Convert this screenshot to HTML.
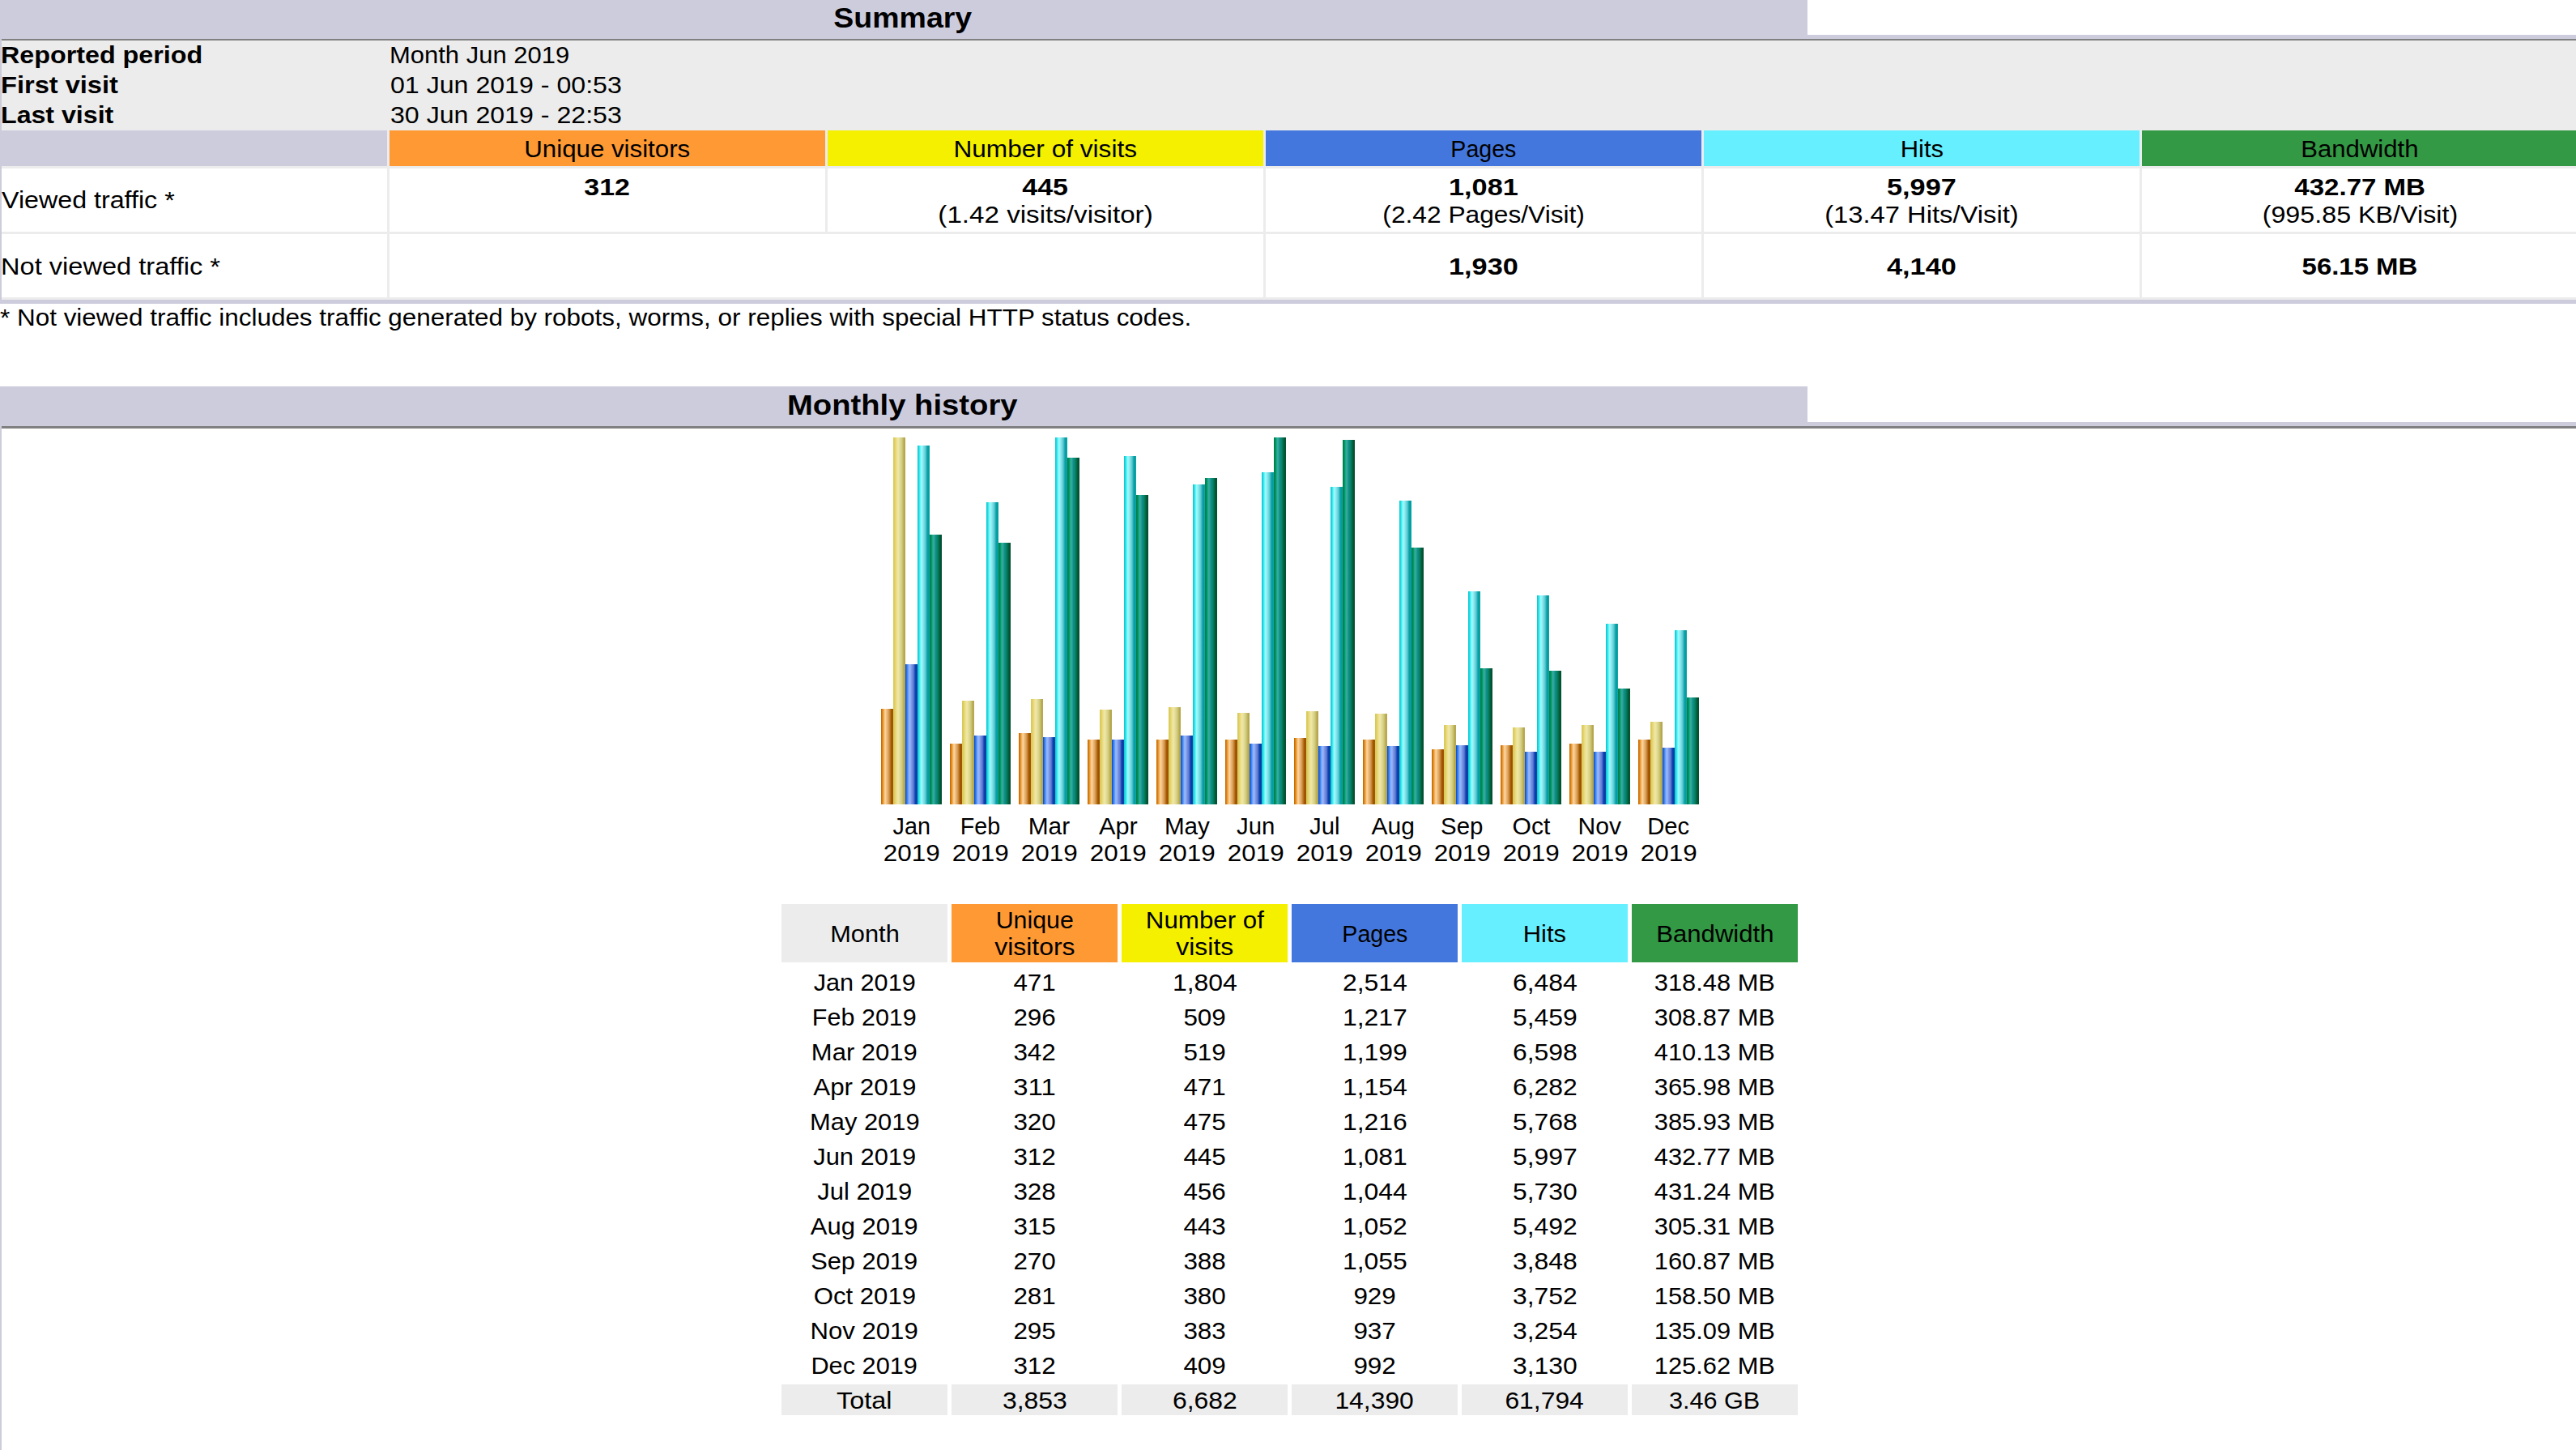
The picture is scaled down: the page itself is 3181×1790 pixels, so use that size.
<!DOCTYPE html>
<html><head><meta charset="utf-8"><title>Statistics</title>
<style>
html,body{margin:0;padding:0;background:#fff;}
body{width:3181px;height:1790px;overflow:hidden;position:relative;font-family:"Liberation Sans",sans-serif;color:#000;}
#p>div{position:absolute;}
.t{white-space:nowrap;line-height:0;}
.c{width:2000px;text-align:center;}
.t span{display:inline-block;}
</style></head><body><div id="p">
<div style="left:0px;top:0px;width:3181px;height:375px;background:#CCCCDD;"></div>
<div style="left:2232px;top:0px;width:949px;height:43px;background:#FFFFFF;"></div>
<div style="left:2px;top:48px;width:3179px;height:2px;background:#808080;"></div>
<div style="left:2px;top:50px;width:3179px;height:320px;background:#ECECEC;"></div>
<div style="left:0px;top:161px;width:478px;height:44px;background:#CCCCDD;"></div>
<div style="left:481px;top:161px;width:538px;height:44px;background:#FF9933;"></div>
<div style="left:1022px;top:161px;width:538px;height:44px;background:#F4F000;"></div>
<div style="left:1563px;top:161px;width:538px;height:44px;background:#4477DD;"></div>
<div style="left:2104px;top:161px;width:538px;height:44px;background:#66F0FF;"></div>
<div style="left:2645px;top:161px;width:538px;height:44px;background:#339944;"></div>
<div style="left:2px;top:208px;width:476px;height:78px;background:#FFFFFF;"></div>
<div style="left:481px;top:208px;width:538px;height:78px;background:#FFFFFF;"></div>
<div style="left:1022px;top:208px;width:538px;height:78px;background:#FFFFFF;"></div>
<div style="left:1563px;top:208px;width:538px;height:78px;background:#FFFFFF;"></div>
<div style="left:2104px;top:208px;width:538px;height:78px;background:#FFFFFF;"></div>
<div style="left:2645px;top:208px;width:538px;height:78px;background:#FFFFFF;"></div>
<div style="left:2px;top:289px;width:476px;height:78px;background:#FFFFFF;"></div>
<div style="left:481px;top:289px;width:1079px;height:78px;background:#FFFFFF;"></div>
<div style="left:1563px;top:289px;width:538px;height:78px;background:#FFFFFF;"></div>
<div style="left:2104px;top:289px;width:538px;height:78px;background:#FFFFFF;"></div>
<div style="left:2645px;top:289px;width:538px;height:78px;background:#FFFFFF;"></div>
<div class="t c" style="left:114.5px;top:21.87px;font-size:35.0px;font-weight:bold;"><span style="transform:scaleX(1.0708)">Summary</span></div>
<div class="t" style="left:1px;top:67.78px;font-size:29.5px;font-weight:bold;"><span style="transform:scaleX(1.0936);transform-origin:0 0">Reported period</span></div>
<div class="t" style="left:1px;top:104.78px;font-size:29.5px;font-weight:bold;"><span style="transform:scaleX(1.1048);transform-origin:0 0">First visit</span></div>
<div class="t" style="left:1px;top:141.78px;font-size:29.5px;font-weight:bold;"><span style="transform:scaleX(1.0893);transform-origin:0 0">Last visit</span></div>
<div class="t" style="left:480.5px;top:67.78px;font-size:29.5px;"><span style="transform:scaleX(1.0498);transform-origin:0 0">Month Jun 2019</span></div>
<div class="t" style="left:482px;top:104.78px;font-size:29.5px;"><span style="transform:scaleX(1.0890);transform-origin:0 0">01 Jun 2019 - 00:53</span></div>
<div class="t" style="left:482px;top:141.78px;font-size:29.5px;"><span style="transform:scaleX(1.0890);transform-origin:0 0">30 Jun 2019 - 22:53</span></div>
<div class="t c" style="left:-250.0px;top:183.78px;font-size:29.5px;"><span style="transform:scaleX(1.0594)">Unique visitors</span></div>
<div class="t c" style="left:291.0px;top:183.78px;font-size:29.5px;"><span style="transform:scaleX(1.0711)">Number of visits</span></div>
<div class="t c" style="left:832.0px;top:183.78px;font-size:29.5px;"><span style="transform:scaleX(0.9676)">Pages</span></div>
<div class="t c" style="left:1373.0px;top:183.78px;font-size:29.5px;"><span style="transform:scaleX(1.0510)">Hits</span></div>
<div class="t c" style="left:1914.0px;top:183.78px;font-size:29.5px;"><span style="transform:scaleX(1.0549)">Bandwidth</span></div>
<div class="t" style="left:2px;top:247.28px;font-size:29.5px;"><span style="transform:scaleX(1.0919);transform-origin:0 0">Viewed traffic *</span></div>
<div class="t c" style="left:-250.0px;top:230.78px;font-size:29.5px;font-weight:bold;"><span style="transform:scaleX(1.1492)">312</span></div>
<div class="t c" style="left:291.0px;top:230.78px;font-size:29.5px;font-weight:bold;"><span style="transform:scaleX(1.1492)">445</span></div>
<div class="t c" style="left:291.0px;top:264.78px;font-size:29.5px;"><span style="transform:scaleX(1.1242)">(1.42 visits/visitor)</span></div>
<div class="t c" style="left:832.0px;top:230.78px;font-size:29.5px;font-weight:bold;"><span style="transform:scaleX(1.1609)">1,081</span></div>
<div class="t c" style="left:832.0px;top:264.78px;font-size:29.5px;"><span style="transform:scaleX(1.0743)">(2.42 Pages/Visit)</span></div>
<div class="t c" style="left:1373.0px;top:230.78px;font-size:29.5px;font-weight:bold;"><span style="transform:scaleX(1.1609)">5,997</span></div>
<div class="t c" style="left:1373.0px;top:264.78px;font-size:29.5px;"><span style="transform:scaleX(1.1095)">(13.47 Hits/Visit)</span></div>
<div class="t c" style="left:1914.0px;top:230.78px;font-size:29.5px;font-weight:bold;"><span style="transform:scaleX(1.1197)">432.77 MB</span></div>
<div class="t c" style="left:1914.0px;top:264.78px;font-size:29.5px;"><span style="transform:scaleX(1.0934)">(995.85 KB/Visit)</span></div>
<div class="t" style="left:1px;top:328.78px;font-size:29.5px;"><span style="transform:scaleX(1.1045);transform-origin:0 0">Not viewed traffic *</span></div>
<div class="t c" style="left:832.0px;top:328.78px;font-size:29.5px;font-weight:bold;"><span style="transform:scaleX(1.1609)">1,930</span></div>
<div class="t c" style="left:1373.0px;top:328.78px;font-size:29.5px;font-weight:bold;"><span style="transform:scaleX(1.1609)">4,140</span></div>
<div class="t c" style="left:1914.0px;top:328.78px;font-size:29.5px;font-weight:bold;"><span style="transform:scaleX(1.1159)">56.15 MB</span></div>
<div class="t" style="left:0px;top:392.28px;font-size:29.5px;"><span style="transform:scaleX(1.0657);transform-origin:0 0">* Not viewed traffic includes traffic generated by robots, worms, or replies with special HTTP status codes.</span></div>
<div style="left:0px;top:477px;width:3181px;height:1313px;background:#CCCCDD;"></div>
<div style="left:2232px;top:477px;width:949px;height:44px;background:#FFFFFF;"></div>
<div style="left:2px;top:526px;width:3179px;height:3px;background:#808080;"></div>
<div style="left:2px;top:529px;width:3179px;height:1261px;background:#FFFFFF;"></div>
<div class="t c" style="left:114.5px;top:499.87px;font-size:35.0px;font-weight:bold;"><span style="transform:scaleX(1.0920)">Monthly history</span></div>
<div style="left:1088px;top:875px;width:15px;height:118px;background:linear-gradient(to right,#C86400 0px,#D27400 1px,#E59A38 2.5px,#FCC888 4.5px,#FCD198 5.5px,#EDBC7E 7px,#DCA45C 9px,#BF7E30 11px,#A85A00 12.5px,#9C4E00 13.8px,#A85A10 15px);"></div>
<div style="left:1103px;top:540px;width:15px;height:453px;background:linear-gradient(to right,#D4CC55 0px,#DECB60 1.5px,#E6D878 3px,#EEE090 4.5px,#F1E8A8 6px,#E2DD98 8px,#D6D088 10px,#C6BC66 12px,#B8AE52 13px,#B0A050 14.2px,#C8B450 15px);"></div>
<div style="left:1118px;top:820px;width:15px;height:173px;background:linear-gradient(to right,#0044DD 0px,#2A70E0 1.5px,#5590F5 3px,#88B4FF 4.5px,#97B4F8 6px,#7890E2 8px,#5F7ED0 10px,#1A44B8 12px,#003DA8 13px,#0C44A6 15px);"></div>
<div style="left:1133px;top:550px;width:15px;height:443px;background:linear-gradient(to right,#08C4CC 0px,#22D8E0 1.5px,#55F0F5 3px,#8CFFFF 4.5px,#9FEEF2 6px,#77DDE5 8px,#55C8D0 10px,#22AAB5 11.5px,#009999 13px,#10A8AD 15px);"></div>
<div style="left:1148px;top:660px;width:15px;height:333px;background:linear-gradient(to right,#007A48 0px,#009058 2px,#09A27A 3px,#2AB095 4px,#3AA8A0 5px,#2AA095 6px,#0E9088 7.5px,#088470 9.5px,#037550 11px,#035E3A 12.5px,#065038 13.5px,#005530 15px);"></div>
<div class="t c" style="left:125.5px;top:1019.78px;font-size:29.5px;"><span style="transform:scaleX(0.9765)">Jan</span></div>
<div class="t c" style="left:125.5px;top:1053.28px;font-size:29.5px;"><span style="transform:scaleX(1.0656)">2019</span></div>
<div style="left:1173px;top:918px;width:15px;height:75px;background:linear-gradient(to right,#C86400 0px,#D27400 1px,#E59A38 2.5px,#FCC888 4.5px,#FCD198 5.5px,#EDBC7E 7px,#DCA45C 9px,#BF7E30 11px,#A85A00 12.5px,#9C4E00 13.8px,#A85A10 15px);"></div>
<div style="left:1188px;top:865px;width:15px;height:128px;background:linear-gradient(to right,#D4CC55 0px,#DECB60 1.5px,#E6D878 3px,#EEE090 4.5px,#F1E8A8 6px,#E2DD98 8px,#D6D088 10px,#C6BC66 12px,#B8AE52 13px,#B0A050 14.2px,#C8B450 15px);"></div>
<div style="left:1203px;top:908px;width:15px;height:85px;background:linear-gradient(to right,#0044DD 0px,#2A70E0 1.5px,#5590F5 3px,#88B4FF 4.5px,#97B4F8 6px,#7890E2 8px,#5F7ED0 10px,#1A44B8 12px,#003DA8 13px,#0C44A6 15px);"></div>
<div style="left:1218px;top:620px;width:15px;height:373px;background:linear-gradient(to right,#08C4CC 0px,#22D8E0 1.5px,#55F0F5 3px,#8CFFFF 4.5px,#9FEEF2 6px,#77DDE5 8px,#55C8D0 10px,#22AAB5 11.5px,#009999 13px,#10A8AD 15px);"></div>
<div style="left:1233px;top:670px;width:15px;height:323px;background:linear-gradient(to right,#007A48 0px,#009058 2px,#09A27A 3px,#2AB095 4px,#3AA8A0 5px,#2AA095 6px,#0E9088 7.5px,#088470 9.5px,#037550 11px,#035E3A 12.5px,#065038 13.5px,#005530 15px);"></div>
<div class="t c" style="left:210.5px;top:1019.78px;font-size:29.5px;"><span style="transform:scaleX(0.9706)">Feb</span></div>
<div class="t c" style="left:210.5px;top:1053.28px;font-size:29.5px;"><span style="transform:scaleX(1.0656)">2019</span></div>
<div style="left:1258px;top:905px;width:15px;height:88px;background:linear-gradient(to right,#C86400 0px,#D27400 1px,#E59A38 2.5px,#FCC888 4.5px,#FCD198 5.5px,#EDBC7E 7px,#DCA45C 9px,#BF7E30 11px,#A85A00 12.5px,#9C4E00 13.8px,#A85A10 15px);"></div>
<div style="left:1273px;top:863px;width:15px;height:130px;background:linear-gradient(to right,#D4CC55 0px,#DECB60 1.5px,#E6D878 3px,#EEE090 4.5px,#F1E8A8 6px,#E2DD98 8px,#D6D088 10px,#C6BC66 12px,#B8AE52 13px,#B0A050 14.2px,#C8B450 15px);"></div>
<div style="left:1288px;top:910px;width:15px;height:83px;background:linear-gradient(to right,#0044DD 0px,#2A70E0 1.5px,#5590F5 3px,#88B4FF 4.5px,#97B4F8 6px,#7890E2 8px,#5F7ED0 10px,#1A44B8 12px,#003DA8 13px,#0C44A6 15px);"></div>
<div style="left:1303px;top:540px;width:15px;height:453px;background:linear-gradient(to right,#08C4CC 0px,#22D8E0 1.5px,#55F0F5 3px,#8CFFFF 4.5px,#9FEEF2 6px,#77DDE5 8px,#55C8D0 10px,#22AAB5 11.5px,#009999 13px,#10A8AD 15px);"></div>
<div style="left:1318px;top:565px;width:15px;height:428px;background:linear-gradient(to right,#007A48 0px,#009058 2px,#09A27A 3px,#2AB095 4px,#3AA8A0 5px,#2AA095 6px,#0E9088 7.5px,#088470 9.5px,#037550 11px,#035E3A 12.5px,#065038 13.5px,#005530 15px);"></div>
<div class="t c" style="left:295.5px;top:1019.78px;font-size:29.5px;"><span style="transform:scaleX(1.0119)">Mar</span></div>
<div class="t c" style="left:295.5px;top:1053.28px;font-size:29.5px;"><span style="transform:scaleX(1.0656)">2019</span></div>
<div style="left:1343px;top:913px;width:15px;height:80px;background:linear-gradient(to right,#C86400 0px,#D27400 1px,#E59A38 2.5px,#FCC888 4.5px,#FCD198 5.5px,#EDBC7E 7px,#DCA45C 9px,#BF7E30 11px,#A85A00 12.5px,#9C4E00 13.8px,#A85A10 15px);"></div>
<div style="left:1358px;top:876px;width:15px;height:117px;background:linear-gradient(to right,#D4CC55 0px,#DECB60 1.5px,#E6D878 3px,#EEE090 4.5px,#F1E8A8 6px,#E2DD98 8px,#D6D088 10px,#C6BC66 12px,#B8AE52 13px,#B0A050 14.2px,#C8B450 15px);"></div>
<div style="left:1373px;top:913px;width:15px;height:80px;background:linear-gradient(to right,#0044DD 0px,#2A70E0 1.5px,#5590F5 3px,#88B4FF 4.5px,#97B4F8 6px,#7890E2 8px,#5F7ED0 10px,#1A44B8 12px,#003DA8 13px,#0C44A6 15px);"></div>
<div style="left:1388px;top:563px;width:15px;height:430px;background:linear-gradient(to right,#08C4CC 0px,#22D8E0 1.5px,#55F0F5 3px,#8CFFFF 4.5px,#9FEEF2 6px,#77DDE5 8px,#55C8D0 10px,#22AAB5 11.5px,#009999 13px,#10A8AD 15px);"></div>
<div style="left:1403px;top:611px;width:15px;height:382px;background:linear-gradient(to right,#007A48 0px,#009058 2px,#09A27A 3px,#2AB095 4px,#3AA8A0 5px,#2AA095 6px,#0E9088 7.5px,#088470 9.5px,#037550 11px,#035E3A 12.5px,#065038 13.5px,#005530 15px);"></div>
<div class="t c" style="left:380.5px;top:1019.78px;font-size:29.5px;"><span style="transform:scaleX(1.0387)">Apr</span></div>
<div class="t c" style="left:380.5px;top:1053.28px;font-size:29.5px;"><span style="transform:scaleX(1.0656)">2019</span></div>
<div style="left:1428px;top:913px;width:15px;height:80px;background:linear-gradient(to right,#C86400 0px,#D27400 1px,#E59A38 2.5px,#FCC888 4.5px,#FCD198 5.5px,#EDBC7E 7px,#DCA45C 9px,#BF7E30 11px,#A85A00 12.5px,#9C4E00 13.8px,#A85A10 15px);"></div>
<div style="left:1443px;top:873px;width:15px;height:120px;background:linear-gradient(to right,#D4CC55 0px,#DECB60 1.5px,#E6D878 3px,#EEE090 4.5px,#F1E8A8 6px,#E2DD98 8px,#D6D088 10px,#C6BC66 12px,#B8AE52 13px,#B0A050 14.2px,#C8B450 15px);"></div>
<div style="left:1458px;top:908px;width:15px;height:85px;background:linear-gradient(to right,#0044DD 0px,#2A70E0 1.5px,#5590F5 3px,#88B4FF 4.5px,#97B4F8 6px,#7890E2 8px,#5F7ED0 10px,#1A44B8 12px,#003DA8 13px,#0C44A6 15px);"></div>
<div style="left:1473px;top:598px;width:15px;height:395px;background:linear-gradient(to right,#08C4CC 0px,#22D8E0 1.5px,#55F0F5 3px,#8CFFFF 4.5px,#9FEEF2 6px,#77DDE5 8px,#55C8D0 10px,#22AAB5 11.5px,#009999 13px,#10A8AD 15px);"></div>
<div style="left:1488px;top:590px;width:15px;height:403px;background:linear-gradient(to right,#007A48 0px,#009058 2px,#09A27A 3px,#2AB095 4px,#3AA8A0 5px,#2AA095 6px,#0E9088 7.5px,#088470 9.5px,#037550 11px,#035E3A 12.5px,#065038 13.5px,#005530 15px);"></div>
<div class="t c" style="left:465.5px;top:1019.78px;font-size:29.5px;"><span style="transform:scaleX(1.0039)">May</span></div>
<div class="t c" style="left:465.5px;top:1053.28px;font-size:29.5px;"><span style="transform:scaleX(1.0656)">2019</span></div>
<div style="left:1513px;top:913px;width:15px;height:80px;background:linear-gradient(to right,#C86400 0px,#D27400 1px,#E59A38 2.5px,#FCC888 4.5px,#FCD198 5.5px,#EDBC7E 7px,#DCA45C 9px,#BF7E30 11px,#A85A00 12.5px,#9C4E00 13.8px,#A85A10 15px);"></div>
<div style="left:1528px;top:880px;width:15px;height:113px;background:linear-gradient(to right,#D4CC55 0px,#DECB60 1.5px,#E6D878 3px,#EEE090 4.5px,#F1E8A8 6px,#E2DD98 8px,#D6D088 10px,#C6BC66 12px,#B8AE52 13px,#B0A050 14.2px,#C8B450 15px);"></div>
<div style="left:1543px;top:918px;width:15px;height:75px;background:linear-gradient(to right,#0044DD 0px,#2A70E0 1.5px,#5590F5 3px,#88B4FF 4.5px,#97B4F8 6px,#7890E2 8px,#5F7ED0 10px,#1A44B8 12px,#003DA8 13px,#0C44A6 15px);"></div>
<div style="left:1558px;top:583px;width:15px;height:410px;background:linear-gradient(to right,#08C4CC 0px,#22D8E0 1.5px,#55F0F5 3px,#8CFFFF 4.5px,#9FEEF2 6px,#77DDE5 8px,#55C8D0 10px,#22AAB5 11.5px,#009999 13px,#10A8AD 15px);"></div>
<div style="left:1573px;top:540px;width:15px;height:453px;background:linear-gradient(to right,#007A48 0px,#009058 2px,#09A27A 3px,#2AB095 4px,#3AA8A0 5px,#2AA095 6px,#0E9088 7.5px,#088470 9.5px,#037550 11px,#035E3A 12.5px,#065038 13.5px,#005530 15px);"></div>
<div class="t c" style="left:550.5px;top:1019.78px;font-size:29.5px;"><span style="transform:scaleX(0.9955)">Jun</span></div>
<div class="t c" style="left:550.5px;top:1053.28px;font-size:29.5px;"><span style="transform:scaleX(1.0656)">2019</span></div>
<div style="left:1598px;top:911px;width:15px;height:82px;background:linear-gradient(to right,#C86400 0px,#D27400 1px,#E59A38 2.5px,#FCC888 4.5px,#FCD198 5.5px,#EDBC7E 7px,#DCA45C 9px,#BF7E30 11px,#A85A00 12.5px,#9C4E00 13.8px,#A85A10 15px);"></div>
<div style="left:1613px;top:878px;width:15px;height:115px;background:linear-gradient(to right,#D4CC55 0px,#DECB60 1.5px,#E6D878 3px,#EEE090 4.5px,#F1E8A8 6px,#E2DD98 8px,#D6D088 10px,#C6BC66 12px,#B8AE52 13px,#B0A050 14.2px,#C8B450 15px);"></div>
<div style="left:1628px;top:921px;width:15px;height:72px;background:linear-gradient(to right,#0044DD 0px,#2A70E0 1.5px,#5590F5 3px,#88B4FF 4.5px,#97B4F8 6px,#7890E2 8px,#5F7ED0 10px,#1A44B8 12px,#003DA8 13px,#0C44A6 15px);"></div>
<div style="left:1643px;top:601px;width:15px;height:392px;background:linear-gradient(to right,#08C4CC 0px,#22D8E0 1.5px,#55F0F5 3px,#8CFFFF 4.5px,#9FEEF2 6px,#77DDE5 8px,#55C8D0 10px,#22AAB5 11.5px,#009999 13px,#10A8AD 15px);"></div>
<div style="left:1658px;top:543px;width:15px;height:450px;background:linear-gradient(to right,#007A48 0px,#009058 2px,#09A27A 3px,#2AB095 4px,#3AA8A0 5px,#2AA095 6px,#0E9088 7.5px,#088470 9.5px,#037550 11px,#035E3A 12.5px,#065038 13.5px,#005530 15px);"></div>
<div class="t c" style="left:635.5px;top:1019.78px;font-size:29.5px;"><span style="transform:scaleX(0.9944)">Jul</span></div>
<div class="t c" style="left:635.5px;top:1053.28px;font-size:29.5px;"><span style="transform:scaleX(1.0656)">2019</span></div>
<div style="left:1683px;top:913px;width:15px;height:80px;background:linear-gradient(to right,#C86400 0px,#D27400 1px,#E59A38 2.5px,#FCC888 4.5px,#FCD198 5.5px,#EDBC7E 7px,#DCA45C 9px,#BF7E30 11px,#A85A00 12.5px,#9C4E00 13.8px,#A85A10 15px);"></div>
<div style="left:1698px;top:881px;width:15px;height:112px;background:linear-gradient(to right,#D4CC55 0px,#DECB60 1.5px,#E6D878 3px,#EEE090 4.5px,#F1E8A8 6px,#E2DD98 8px,#D6D088 10px,#C6BC66 12px,#B8AE52 13px,#B0A050 14.2px,#C8B450 15px);"></div>
<div style="left:1713px;top:921px;width:15px;height:72px;background:linear-gradient(to right,#0044DD 0px,#2A70E0 1.5px,#5590F5 3px,#88B4FF 4.5px,#97B4F8 6px,#7890E2 8px,#5F7ED0 10px,#1A44B8 12px,#003DA8 13px,#0C44A6 15px);"></div>
<div style="left:1728px;top:618px;width:15px;height:375px;background:linear-gradient(to right,#08C4CC 0px,#22D8E0 1.5px,#55F0F5 3px,#8CFFFF 4.5px,#9FEEF2 6px,#77DDE5 8px,#55C8D0 10px,#22AAB5 11.5px,#009999 13px,#10A8AD 15px);"></div>
<div style="left:1743px;top:676px;width:15px;height:317px;background:linear-gradient(to right,#007A48 0px,#009058 2px,#09A27A 3px,#2AB095 4px,#3AA8A0 5px,#2AA095 6px,#0E9088 7.5px,#088470 9.5px,#037550 11px,#035E3A 12.5px,#065038 13.5px,#005530 15px);"></div>
<div class="t c" style="left:720.5px;top:1019.78px;font-size:29.5px;"><span style="transform:scaleX(1.0165)">Aug</span></div>
<div class="t c" style="left:720.5px;top:1053.28px;font-size:29.5px;"><span style="transform:scaleX(1.0656)">2019</span></div>
<div style="left:1768px;top:925px;width:15px;height:68px;background:linear-gradient(to right,#C86400 0px,#D27400 1px,#E59A38 2.5px,#FCC888 4.5px,#FCD198 5.5px,#EDBC7E 7px,#DCA45C 9px,#BF7E30 11px,#A85A00 12.5px,#9C4E00 13.8px,#A85A10 15px);"></div>
<div style="left:1783px;top:895px;width:15px;height:98px;background:linear-gradient(to right,#D4CC55 0px,#DECB60 1.5px,#E6D878 3px,#EEE090 4.5px,#F1E8A8 6px,#E2DD98 8px,#D6D088 10px,#C6BC66 12px,#B8AE52 13px,#B0A050 14.2px,#C8B450 15px);"></div>
<div style="left:1798px;top:920px;width:15px;height:73px;background:linear-gradient(to right,#0044DD 0px,#2A70E0 1.5px,#5590F5 3px,#88B4FF 4.5px,#97B4F8 6px,#7890E2 8px,#5F7ED0 10px,#1A44B8 12px,#003DA8 13px,#0C44A6 15px);"></div>
<div style="left:1813px;top:730px;width:15px;height:263px;background:linear-gradient(to right,#08C4CC 0px,#22D8E0 1.5px,#55F0F5 3px,#8CFFFF 4.5px,#9FEEF2 6px,#77DDE5 8px,#55C8D0 10px,#22AAB5 11.5px,#009999 13px,#10A8AD 15px);"></div>
<div style="left:1828px;top:825px;width:15px;height:168px;background:linear-gradient(to right,#007A48 0px,#009058 2px,#09A27A 3px,#2AB095 4px,#3AA8A0 5px,#2AA095 6px,#0E9088 7.5px,#088470 9.5px,#037550 11px,#035E3A 12.5px,#065038 13.5px,#005530 15px);"></div>
<div class="t c" style="left:805.5px;top:1019.78px;font-size:29.5px;"><span style="transform:scaleX(0.9975)">Sep</span></div>
<div class="t c" style="left:805.5px;top:1053.28px;font-size:29.5px;"><span style="transform:scaleX(1.0656)">2019</span></div>
<div style="left:1853px;top:920px;width:15px;height:73px;background:linear-gradient(to right,#C86400 0px,#D27400 1px,#E59A38 2.5px,#FCC888 4.5px,#FCD198 5.5px,#EDBC7E 7px,#DCA45C 9px,#BF7E30 11px,#A85A00 12.5px,#9C4E00 13.8px,#A85A10 15px);"></div>
<div style="left:1868px;top:898px;width:15px;height:95px;background:linear-gradient(to right,#D4CC55 0px,#DECB60 1.5px,#E6D878 3px,#EEE090 4.5px,#F1E8A8 6px,#E2DD98 8px,#D6D088 10px,#C6BC66 12px,#B8AE52 13px,#B0A050 14.2px,#C8B450 15px);"></div>
<div style="left:1883px;top:928px;width:15px;height:65px;background:linear-gradient(to right,#0044DD 0px,#2A70E0 1.5px,#5590F5 3px,#88B4FF 4.5px,#97B4F8 6px,#7890E2 8px,#5F7ED0 10px,#1A44B8 12px,#003DA8 13px,#0C44A6 15px);"></div>
<div style="left:1898px;top:735px;width:15px;height:258px;background:linear-gradient(to right,#08C4CC 0px,#22D8E0 1.5px,#55F0F5 3px,#8CFFFF 4.5px,#9FEEF2 6px,#77DDE5 8px,#55C8D0 10px,#22AAB5 11.5px,#009999 13px,#10A8AD 15px);"></div>
<div style="left:1913px;top:828px;width:15px;height:165px;background:linear-gradient(to right,#007A48 0px,#009058 2px,#09A27A 3px,#2AB095 4px,#3AA8A0 5px,#2AA095 6px,#0E9088 7.5px,#088470 9.5px,#037550 11px,#035E3A 12.5px,#065038 13.5px,#005530 15px);"></div>
<div class="t c" style="left:890.5px;top:1019.78px;font-size:29.5px;"><span style="transform:scaleX(1.0197)">Oct</span></div>
<div class="t c" style="left:890.5px;top:1053.28px;font-size:29.5px;"><span style="transform:scaleX(1.0656)">2019</span></div>
<div style="left:1938px;top:918px;width:15px;height:75px;background:linear-gradient(to right,#C86400 0px,#D27400 1px,#E59A38 2.5px,#FCC888 4.5px,#FCD198 5.5px,#EDBC7E 7px,#DCA45C 9px,#BF7E30 11px,#A85A00 12.5px,#9C4E00 13.8px,#A85A10 15px);"></div>
<div style="left:1953px;top:895px;width:15px;height:98px;background:linear-gradient(to right,#D4CC55 0px,#DECB60 1.5px,#E6D878 3px,#EEE090 4.5px,#F1E8A8 6px,#E2DD98 8px,#D6D088 10px,#C6BC66 12px,#B8AE52 13px,#B0A050 14.2px,#C8B450 15px);"></div>
<div style="left:1968px;top:928px;width:15px;height:65px;background:linear-gradient(to right,#0044DD 0px,#2A70E0 1.5px,#5590F5 3px,#88B4FF 4.5px,#97B4F8 6px,#7890E2 8px,#5F7ED0 10px,#1A44B8 12px,#003DA8 13px,#0C44A6 15px);"></div>
<div style="left:1983px;top:770px;width:15px;height:223px;background:linear-gradient(to right,#08C4CC 0px,#22D8E0 1.5px,#55F0F5 3px,#8CFFFF 4.5px,#9FEEF2 6px,#77DDE5 8px,#55C8D0 10px,#22AAB5 11.5px,#009999 13px,#10A8AD 15px);"></div>
<div style="left:1998px;top:850px;width:15px;height:143px;background:linear-gradient(to right,#007A48 0px,#009058 2px,#09A27A 3px,#2AB095 4px,#3AA8A0 5px,#2AA095 6px,#0E9088 7.5px,#088470 9.5px,#037550 11px,#035E3A 12.5px,#065038 13.5px,#005530 15px);"></div>
<div class="t c" style="left:975.5px;top:1019.78px;font-size:29.5px;"><span style="transform:scaleX(1.0207)">Nov</span></div>
<div class="t c" style="left:975.5px;top:1053.28px;font-size:29.5px;"><span style="transform:scaleX(1.0656)">2019</span></div>
<div style="left:2023px;top:913px;width:15px;height:80px;background:linear-gradient(to right,#C86400 0px,#D27400 1px,#E59A38 2.5px,#FCC888 4.5px,#FCD198 5.5px,#EDBC7E 7px,#DCA45C 9px,#BF7E30 11px,#A85A00 12.5px,#9C4E00 13.8px,#A85A10 15px);"></div>
<div style="left:2038px;top:891px;width:15px;height:102px;background:linear-gradient(to right,#D4CC55 0px,#DECB60 1.5px,#E6D878 3px,#EEE090 4.5px,#F1E8A8 6px,#E2DD98 8px,#D6D088 10px,#C6BC66 12px,#B8AE52 13px,#B0A050 14.2px,#C8B450 15px);"></div>
<div style="left:2053px;top:923px;width:15px;height:70px;background:linear-gradient(to right,#0044DD 0px,#2A70E0 1.5px,#5590F5 3px,#88B4FF 4.5px,#97B4F8 6px,#7890E2 8px,#5F7ED0 10px,#1A44B8 12px,#003DA8 13px,#0C44A6 15px);"></div>
<div style="left:2068px;top:778px;width:15px;height:215px;background:linear-gradient(to right,#08C4CC 0px,#22D8E0 1.5px,#55F0F5 3px,#8CFFFF 4.5px,#9FEEF2 6px,#77DDE5 8px,#55C8D0 10px,#22AAB5 11.5px,#009999 13px,#10A8AD 15px);"></div>
<div style="left:2083px;top:861px;width:15px;height:132px;background:linear-gradient(to right,#007A48 0px,#009058 2px,#09A27A 3px,#2AB095 4px,#3AA8A0 5px,#2AA095 6px,#0E9088 7.5px,#088470 9.5px,#037550 11px,#035E3A 12.5px,#065038 13.5px,#005530 15px);"></div>
<div class="t c" style="left:1060.5px;top:1019.78px;font-size:29.5px;"><span style="transform:scaleX(0.9892)">Dec</span></div>
<div class="t c" style="left:1060.5px;top:1053.28px;font-size:29.5px;"><span style="transform:scaleX(1.0656)">2019</span></div>
<div style="left:965px;top:1116px;width:205px;height:71.5px;background:#ECECEC;"></div>
<div style="left:1175px;top:1116px;width:205px;height:71.5px;background:#FF9933;"></div>
<div style="left:1385px;top:1116px;width:205px;height:71.5px;background:#F4F000;"></div>
<div style="left:1595px;top:1116px;width:205px;height:71.5px;background:#4477DD;"></div>
<div style="left:1805px;top:1116px;width:205px;height:71.5px;background:#66F0FF;"></div>
<div style="left:2015px;top:1116px;width:205px;height:71.5px;background:#339944;"></div>
<div class="t c" style="left:67.5px;top:1152.78px;font-size:29.5px;"><span style="transform:scaleX(1.0428)">Month</span></div>
<div class="t c" style="left:277.5px;top:1135.78px;font-size:29.5px;"><span style="transform:scaleX(1.0270)">Unique</span></div>
<div class="t c" style="left:277.5px;top:1169.28px;font-size:29.5px;"><span style="transform:scaleX(1.0818)">visitors</span></div>
<div class="t c" style="left:487.5px;top:1135.78px;font-size:29.5px;"><span style="transform:scaleX(1.0600)">Number of</span></div>
<div class="t c" style="left:487.5px;top:1169.28px;font-size:29.5px;"><span style="transform:scaleX(1.0810)">visits</span></div>
<div class="t c" style="left:697.5px;top:1152.78px;font-size:29.5px;"><span style="transform:scaleX(0.9676)">Pages</span></div>
<div class="t c" style="left:907.5px;top:1152.78px;font-size:29.5px;"><span style="transform:scaleX(1.0510)">Hits</span></div>
<div class="t c" style="left:1117.5px;top:1152.78px;font-size:29.5px;"><span style="transform:scaleX(1.0549)">Bandwidth</span></div>
<div class="t c" style="left:67.5px;top:1212.78px;font-size:29.5px;"><span style="transform:scaleX(1.0384)">Jan 2019</span></div>
<div class="t c" style="left:277.5px;top:1212.78px;font-size:29.5px;"><span style="transform:scaleX(1.0656)">471</span></div>
<div class="t c" style="left:487.5px;top:1212.78px;font-size:29.5px;"><span style="transform:scaleX(1.0825)">1,804</span></div>
<div class="t c" style="left:697.5px;top:1212.78px;font-size:29.5px;"><span style="transform:scaleX(1.0825)">2,514</span></div>
<div class="t c" style="left:907.5px;top:1212.78px;font-size:29.5px;"><span style="transform:scaleX(1.0825)">6,484</span></div>
<div class="t c" style="left:1117.5px;top:1212.78px;font-size:29.5px;"><span style="transform:scaleX(1.0450)">318.48 MB</span></div>
<div class="t c" style="left:67.5px;top:1255.78px;font-size:29.5px;"><span style="transform:scaleX(1.0343)">Feb 2019</span></div>
<div class="t c" style="left:277.5px;top:1255.78px;font-size:29.5px;"><span style="transform:scaleX(1.0656)">296</span></div>
<div class="t c" style="left:487.5px;top:1255.78px;font-size:29.5px;"><span style="transform:scaleX(1.0656)">509</span></div>
<div class="t c" style="left:697.5px;top:1255.78px;font-size:29.5px;"><span style="transform:scaleX(1.0825)">1,217</span></div>
<div class="t c" style="left:907.5px;top:1255.78px;font-size:29.5px;"><span style="transform:scaleX(1.0825)">5,459</span></div>
<div class="t c" style="left:1117.5px;top:1255.78px;font-size:29.5px;"><span style="transform:scaleX(1.0450)">308.87 MB</span></div>
<div class="t c" style="left:67.5px;top:1298.78px;font-size:29.5px;"><span style="transform:scaleX(1.0511)">Mar 2019</span></div>
<div class="t c" style="left:277.5px;top:1298.78px;font-size:29.5px;"><span style="transform:scaleX(1.0656)">342</span></div>
<div class="t c" style="left:487.5px;top:1298.78px;font-size:29.5px;"><span style="transform:scaleX(1.0656)">519</span></div>
<div class="t c" style="left:697.5px;top:1298.78px;font-size:29.5px;"><span style="transform:scaleX(1.0825)">1,199</span></div>
<div class="t c" style="left:907.5px;top:1298.78px;font-size:29.5px;"><span style="transform:scaleX(1.0825)">6,598</span></div>
<div class="t c" style="left:1117.5px;top:1298.78px;font-size:29.5px;"><span style="transform:scaleX(1.0450)">410.13 MB</span></div>
<div class="t c" style="left:67.5px;top:1341.78px;font-size:29.5px;"><span style="transform:scaleX(1.0630)">Apr 2019</span></div>
<div class="t c" style="left:277.5px;top:1341.78px;font-size:29.5px;"><span style="transform:scaleX(1.1152)">311</span></div>
<div class="t c" style="left:487.5px;top:1341.78px;font-size:29.5px;"><span style="transform:scaleX(1.0656)">471</span></div>
<div class="t c" style="left:697.5px;top:1341.78px;font-size:29.5px;"><span style="transform:scaleX(1.0825)">1,154</span></div>
<div class="t c" style="left:907.5px;top:1341.78px;font-size:29.5px;"><span style="transform:scaleX(1.0825)">6,282</span></div>
<div class="t c" style="left:1117.5px;top:1341.78px;font-size:29.5px;"><span style="transform:scaleX(1.0450)">365.98 MB</span></div>
<div class="t c" style="left:67.5px;top:1384.78px;font-size:29.5px;"><span style="transform:scaleX(1.0462)">May 2019</span></div>
<div class="t c" style="left:277.5px;top:1384.78px;font-size:29.5px;"><span style="transform:scaleX(1.0656)">320</span></div>
<div class="t c" style="left:487.5px;top:1384.78px;font-size:29.5px;"><span style="transform:scaleX(1.0656)">475</span></div>
<div class="t c" style="left:697.5px;top:1384.78px;font-size:29.5px;"><span style="transform:scaleX(1.0825)">1,216</span></div>
<div class="t c" style="left:907.5px;top:1384.78px;font-size:29.5px;"><span style="transform:scaleX(1.0825)">5,768</span></div>
<div class="t c" style="left:1117.5px;top:1384.78px;font-size:29.5px;"><span style="transform:scaleX(1.0450)">385.93 MB</span></div>
<div class="t c" style="left:67.5px;top:1427.78px;font-size:29.5px;"><span style="transform:scaleX(1.0458)">Jun 2019</span></div>
<div class="t c" style="left:277.5px;top:1427.78px;font-size:29.5px;"><span style="transform:scaleX(1.0656)">312</span></div>
<div class="t c" style="left:487.5px;top:1427.78px;font-size:29.5px;"><span style="transform:scaleX(1.0656)">445</span></div>
<div class="t c" style="left:697.5px;top:1427.78px;font-size:29.5px;"><span style="transform:scaleX(1.0825)">1,081</span></div>
<div class="t c" style="left:907.5px;top:1427.78px;font-size:29.5px;"><span style="transform:scaleX(1.0825)">5,997</span></div>
<div class="t c" style="left:1117.5px;top:1427.78px;font-size:29.5px;"><span style="transform:scaleX(1.0450)">432.77 MB</span></div>
<div class="t c" style="left:67.5px;top:1470.78px;font-size:29.5px;"><span style="transform:scaleX(1.0498)">Jul 2019</span></div>
<div class="t c" style="left:277.5px;top:1470.78px;font-size:29.5px;"><span style="transform:scaleX(1.0656)">328</span></div>
<div class="t c" style="left:487.5px;top:1470.78px;font-size:29.5px;"><span style="transform:scaleX(1.0656)">456</span></div>
<div class="t c" style="left:697.5px;top:1470.78px;font-size:29.5px;"><span style="transform:scaleX(1.0825)">1,044</span></div>
<div class="t c" style="left:907.5px;top:1470.78px;font-size:29.5px;"><span style="transform:scaleX(1.0825)">5,730</span></div>
<div class="t c" style="left:1117.5px;top:1470.78px;font-size:29.5px;"><span style="transform:scaleX(1.0450)">431.24 MB</span></div>
<div class="t c" style="left:67.5px;top:1513.78px;font-size:29.5px;"><span style="transform:scaleX(1.0525)">Aug 2019</span></div>
<div class="t c" style="left:277.5px;top:1513.78px;font-size:29.5px;"><span style="transform:scaleX(1.0656)">315</span></div>
<div class="t c" style="left:487.5px;top:1513.78px;font-size:29.5px;"><span style="transform:scaleX(1.0656)">443</span></div>
<div class="t c" style="left:697.5px;top:1513.78px;font-size:29.5px;"><span style="transform:scaleX(1.0825)">1,052</span></div>
<div class="t c" style="left:907.5px;top:1513.78px;font-size:29.5px;"><span style="transform:scaleX(1.0825)">5,492</span></div>
<div class="t c" style="left:1117.5px;top:1513.78px;font-size:29.5px;"><span style="transform:scaleX(1.0450)">305.31 MB</span></div>
<div class="t c" style="left:67.5px;top:1556.78px;font-size:29.5px;"><span style="transform:scaleX(1.0447)">Sep 2019</span></div>
<div class="t c" style="left:277.5px;top:1556.78px;font-size:29.5px;"><span style="transform:scaleX(1.0656)">270</span></div>
<div class="t c" style="left:487.5px;top:1556.78px;font-size:29.5px;"><span style="transform:scaleX(1.0656)">388</span></div>
<div class="t c" style="left:697.5px;top:1556.78px;font-size:29.5px;"><span style="transform:scaleX(1.0825)">1,055</span></div>
<div class="t c" style="left:907.5px;top:1556.78px;font-size:29.5px;"><span style="transform:scaleX(1.0825)">3,848</span></div>
<div class="t c" style="left:1117.5px;top:1556.78px;font-size:29.5px;"><span style="transform:scaleX(1.0450)">160.87 MB</span></div>
<div class="t c" style="left:67.5px;top:1599.78px;font-size:29.5px;"><span style="transform:scaleX(1.0557)">Oct 2019</span></div>
<div class="t c" style="left:277.5px;top:1599.78px;font-size:29.5px;"><span style="transform:scaleX(1.0656)">281</span></div>
<div class="t c" style="left:487.5px;top:1599.78px;font-size:29.5px;"><span style="transform:scaleX(1.0656)">380</span></div>
<div class="t c" style="left:697.5px;top:1599.78px;font-size:29.5px;"><span style="transform:scaleX(1.0656)">929</span></div>
<div class="t c" style="left:907.5px;top:1599.78px;font-size:29.5px;"><span style="transform:scaleX(1.0825)">3,752</span></div>
<div class="t c" style="left:1117.5px;top:1599.78px;font-size:29.5px;"><span style="transform:scaleX(1.0450)">158.50 MB</span></div>
<div class="t c" style="left:67.5px;top:1642.78px;font-size:29.5px;"><span style="transform:scaleX(1.0543)">Nov 2019</span></div>
<div class="t c" style="left:277.5px;top:1642.78px;font-size:29.5px;"><span style="transform:scaleX(1.0656)">295</span></div>
<div class="t c" style="left:487.5px;top:1642.78px;font-size:29.5px;"><span style="transform:scaleX(1.0656)">383</span></div>
<div class="t c" style="left:697.5px;top:1642.78px;font-size:29.5px;"><span style="transform:scaleX(1.0656)">937</span></div>
<div class="t c" style="left:907.5px;top:1642.78px;font-size:29.5px;"><span style="transform:scaleX(1.0825)">3,254</span></div>
<div class="t c" style="left:1117.5px;top:1642.78px;font-size:29.5px;"><span style="transform:scaleX(1.0450)">135.09 MB</span></div>
<div class="t c" style="left:67.5px;top:1685.78px;font-size:29.5px;"><span style="transform:scaleX(1.0412)">Dec 2019</span></div>
<div class="t c" style="left:277.5px;top:1685.78px;font-size:29.5px;"><span style="transform:scaleX(1.0656)">312</span></div>
<div class="t c" style="left:487.5px;top:1685.78px;font-size:29.5px;"><span style="transform:scaleX(1.0656)">409</span></div>
<div class="t c" style="left:697.5px;top:1685.78px;font-size:29.5px;"><span style="transform:scaleX(1.0656)">992</span></div>
<div class="t c" style="left:907.5px;top:1685.78px;font-size:29.5px;"><span style="transform:scaleX(1.0825)">3,130</span></div>
<div class="t c" style="left:1117.5px;top:1685.78px;font-size:29.5px;"><span style="transform:scaleX(1.0450)">125.62 MB</span></div>
<div style="left:965px;top:1709px;width:205px;height:38px;background:#ECECEC;"></div>
<div style="left:1175px;top:1709px;width:205px;height:38px;background:#ECECEC;"></div>
<div style="left:1385px;top:1709px;width:205px;height:38px;background:#ECECEC;"></div>
<div style="left:1595px;top:1709px;width:205px;height:38px;background:#ECECEC;"></div>
<div style="left:1805px;top:1709px;width:205px;height:38px;background:#ECECEC;"></div>
<div style="left:2015px;top:1709px;width:205px;height:38px;background:#ECECEC;"></div>
<div class="t c" style="left:67.5px;top:1728.78px;font-size:29.5px;"><span style="transform:scaleX(1.0979)">Total</span></div>
<div class="t c" style="left:277.5px;top:1728.78px;font-size:29.5px;"><span style="transform:scaleX(1.0825)">3,853</span></div>
<div class="t c" style="left:487.5px;top:1728.78px;font-size:29.5px;"><span style="transform:scaleX(1.0825)">6,682</span></div>
<div class="t c" style="left:697.5px;top:1728.78px;font-size:29.5px;"><span style="transform:scaleX(1.0795)">14,390</span></div>
<div class="t c" style="left:907.5px;top:1728.78px;font-size:29.5px;"><span style="transform:scaleX(1.0795)">61,794</span></div>
<div class="t c" style="left:1117.5px;top:1728.78px;font-size:29.5px;"><span style="transform:scaleX(1.0373)">3.46 GB</span></div>
</div></body></html>
